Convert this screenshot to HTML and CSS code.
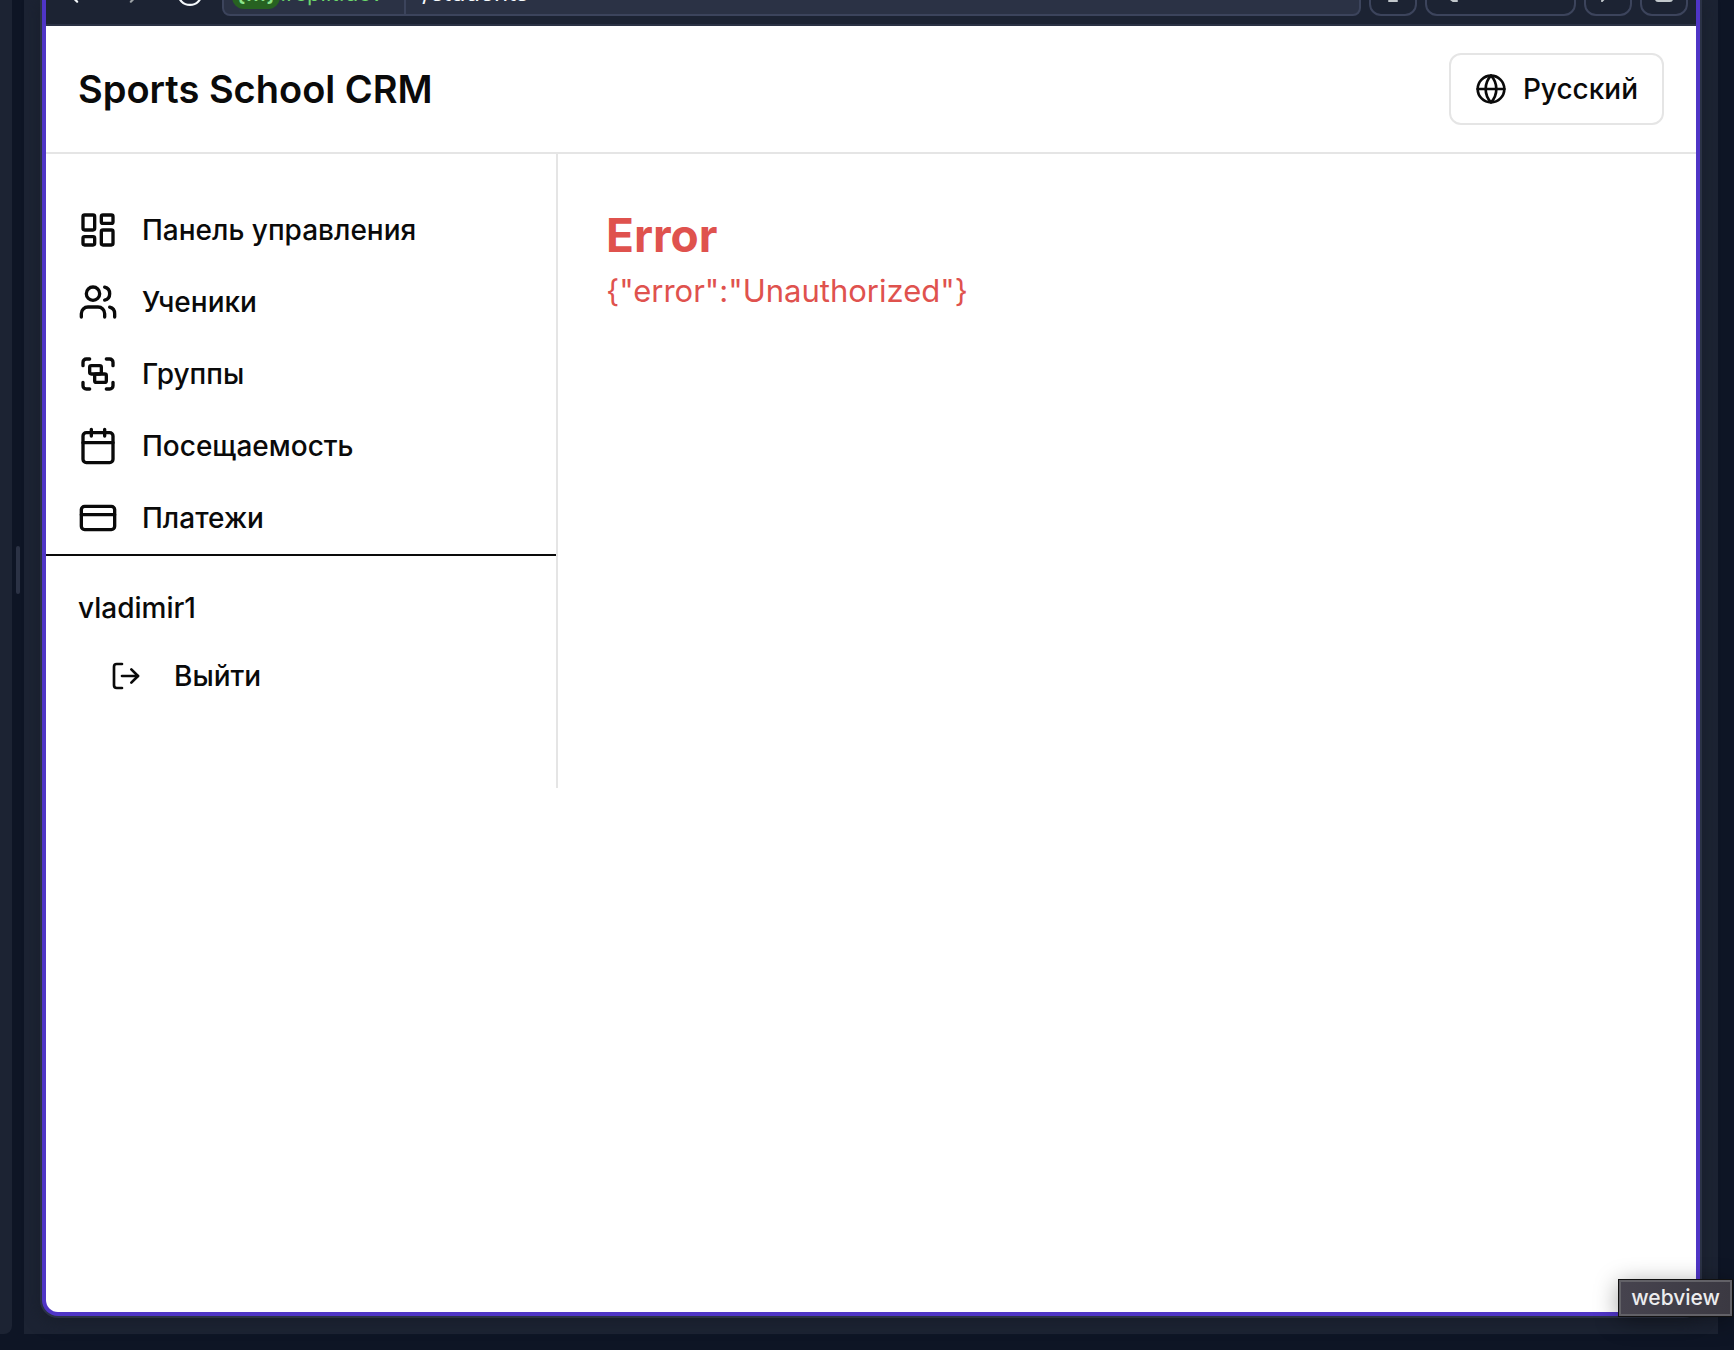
FILE: index.html
```html
<!DOCTYPE html>
<html lang="ru">
<head>
<meta charset="utf-8">
<title>Sports School CRM</title>
<link rel="stylesheet" href="styles.css">
</head>
<body>
<div class="workspace">
  <div class="side-pane"></div>
  <div class="splitter"><span class="grip"></span></div>
  <div class="pane">
    <div class="webview">
      <div class="toolbar">
        <div class="nav-tools">
          <button class="tool" aria-label="Back"><svg viewBox="0 0 24 24"><path d="M15 3l-9 9 8 8"/></svg></button>
          <button class="tool dim" aria-label="Forward"><svg viewBox="0 0 24 24"><path d="M9 3l9 9-8 8"/></svg></button>
          <button class="tool" aria-label="Reload"><svg viewBox="0 0 24 24"><circle cx="11" cy="12" r="11"/></svg></button>
        </div>
        <div class="address">
          <div class="host"><span class="badge">{...}</span><span>.replit.dev</span></div>
          <div class="path">/students</div>
        </div>
        <div class="actions">
          <button class="box" aria-label="Devices"><svg viewBox="0 0 24 24"><path d="M3 4h18v12H3zM12 16v5M8 21h8"/></svg></button>
          <button class="box wide" aria-label="Devtools"><svg viewBox="0 0 24 24"><path d="M6 14v4l4 3h4"/></svg></button>
          <button class="box" aria-label="Tools"><svg viewBox="0 0 24 24"><path d="M6 21l8-8"/></svg></button>
          <button class="box" aria-label="Open in new tab"><svg viewBox="0 0 24 24"><rect x="4" y="4" width="16" height="17" rx="2"/></svg></button>
        </div>
      </div>
      <header class="header">
        <h1 class="brand">Sports School CRM</h1>
        <button class="language">
          <svg class="icon-md" viewBox="0 0 24 24"><circle cx="12" cy="12" r="10"/><path d="M12 2a14.5 14.5 0 0 0 0 20 14.5 14.5 0 0 0 0-20"/><path d="M2 12h20"/></svg>
          Русский
        </button>
      </header>
      <div class="layout">
        <aside class="sidebar">
          <nav class="menu">
            <a class="item" href="#"><svg class="icon-lg" viewBox="0 0 24 24"><rect x="3" y="3" width="7" height="9" rx="1"/><rect x="14" y="3" width="7" height="5" rx="1"/><rect x="14" y="12" width="7" height="9" rx="1"/><rect x="3" y="16" width="7" height="5" rx="1"/></svg>Панель управления</a>
            <a class="item" href="#"><svg class="icon-lg" viewBox="0 0 24 24"><path d="M16 21v-2a4 4 0 0 0-4-4H6a4 4 0 0 0-4 4v2"/><circle cx="9" cy="7" r="4"/><path d="M22 21v-2a4 4 0 0 0-3-3.870"/><path d="M16 3.130a4 4 0 0 1 0 7.750"/></svg>Ученики</a>
            <a class="item" href="#"><svg class="icon-lg" viewBox="0 0 24 24"><path d="M3 7V5c0-1.100.900-2 2-2h2"/><path d="M17 3h2c1.100 0 2 .900 2 2v2"/><path d="M21 17v2c0 1.100-.900 2-2 2h-2"/><path d="M7 21H5c-1.100 0-2-.900-2-2v-2"/><rect x="7" y="7" width="7" height="5" rx="1"/><rect x="10" y="12" width="7" height="5" rx="1"/></svg>Группы</a>
            <a class="item" href="#"><svg class="icon-lg" viewBox="0 0 24 24"><path d="M8 2v4M16 2v4"/><rect x="3" y="4" width="18" height="18" rx="2"/><path d="M3 10h18"/></svg>Посещаемость</a>
            <a class="item" href="#"><svg class="icon-lg" viewBox="0 0 24 24"><rect x="2" y="5" width="20" height="14" rx="2"/><path d="M2 10h20"/></svg>Платежи</a>
          </nav>
          <div class="account">
            <p class="user">vladimir1</p>
            <button class="logout"><svg class="icon-md" viewBox="0 0 24 24"><path d="M9 21H5a2 2 0 0 1-2-2V5a2 2 0 0 1 2-2h4"/><path d="M16 17l5-5-5-5"/><path d="M21 12H9"/></svg>Выйти</button>
          </div>
        </aside>
        <main class="content">
          <h2 class="error-title">Error</h2>
          <p class="error-text">{"error":"Unauthorized"}</p>
        </main>
      </div>
    </div>
  </div>
</div>
<div class="tooltip" role="tooltip">webview</div>
</body>
</html>
```

FILE: styles.css
```css
* {
  box-sizing: border-box;
}

body {
  margin: 0;
  background: #0e1525;
  color: #0a0a0a;
  font-family: Inter, "Liberation Sans", sans-serif;
  font-size: 28px;
  line-height: 40px;
}

h1, h2, p {
  margin: 0;
}

button {
  margin: 0;
  padding: 0;
  border: 0;
  background: none;
  color: inherit;
  font: inherit;
}

a {
  color: inherit;
  text-decoration: none;
}

svg {
  flex: none;
  fill: none;
  stroke: currentColor;
  stroke-width: 2;
  stroke-linecap: round;
  stroke-linejoin: round;
}

.icon-md {
  width: 32px;
  height: 32px;
}

.icon-lg {
  width: 40px;
  height: 40px;
}

.workspace {
  display: flex;
  height: 100vh;
  padding: 0 16px 16px 0;
  overflow: hidden;
}

.side-pane {
  width: 12px;
  background: #1c2333;
  border-radius: 0 0 8px 0;
}

.splitter {
  display: flex;
  width: 12px;
  justify-content: center;
  padding-top: 546px;
}

.grip {
  width: 4px;
  height: 48px;
  border-radius: 2px;
  background: #2b3245;
}

.pane {
  display: flex;
  flex: 1;
  min-width: 0;
  padding: 0 16px 16px;
  background: #1c2333;
}

.webview {
  display: flex;
  flex: 1;
  min-width: 0;
  flex-direction: column;
  overflow: hidden;
  border: solid #4f35c6;
  border-width: 0 4px 4px;
  border-radius: 0 0 16px 16px;
  margin: 0 2px 2px;
  background: #fff;
  box-shadow: 0 0 0 2px #2b3245, 0 4px 16px 2px #181e2b;
}

.toolbar {
  display: flex;
  height: 26px;
  flex: none;
  align-items: flex-end;
  padding: 0 8px;
  border-bottom: 2px solid #2b3245;
  background: #1c2333;
  color: #f5f9fc;
}

.nav-tools {
  display: flex;
  width: 168px;
  flex: none;
  gap: 32px;
  padding: 0 0 18px 8px;
}

.tool {
  display: flex;
}

.tool svg {
  width: 26px;
  height: 26px;
  overflow: visible;
}

.dim {
  color: #9da2a6;
}

.address {
  display: flex;
  height: 48px;
  flex: 1;
  margin: 0 8px 8px 0;
  border: 2px solid #3c445c;
  border-radius: 8px;
  background: #2b3245;
  font-size: 24px;
  line-height: 32px;
}

.host {
  display: flex;
  width: 182px;
  flex: none;
  align-items: center;
  padding: 2px 0 0 8px;
  border-right: 2px solid #3c445c;
  color: #6cd96c;
  font-size: 22px;
}

.badge {
  width: 48px;
  border-radius: 12px;
  background: #276221;
  color: #8be58b;
  font-weight: 600;
  text-align: center;
}

.path {
  align-self: center;
  padding: 2px 16px 0;
}

.actions {
  display: flex;
  gap: 8px;
  padding-bottom: 8px;
}

.box {
  display: flex;
  width: 48px;
  height: 48px;
  align-items: center;
  justify-content: center;
  border: 2px solid #3c445c;
  border-radius: 12px;
  color: #c2c8cc;
}

.box svg {
  width: 24px;
  height: 24px;
}

.wide {
  width: 151px;
  justify-content: flex-start;
  padding-left: 16px;
}

.header {
  display: flex;
  height: 128px;
  flex: none;
  align-items: center;
  justify-content: space-between;
  padding: 0 32px;
  border-bottom: 2px solid #e5e5e5;
}

.brand {
  font-size: 38px;
  font-weight: 600;
  line-height: 56px;
}

.language {
  display: flex;
  height: 72px;
  align-items: center;
  gap: 16px;
  padding: 0 24px;
  border: 2px solid #e5e5e5;
  border-radius: 12px;
  font-weight: 500;
}

.layout {
  display: flex;
  align-items: flex-start;
}

.sidebar {
  width: 512px;
  flex: none;
  padding: 40px 0 76px;
  border-right: 2px solid #e5e5e5;
  font-weight: 500;
}

.menu {
  border-bottom: 2px solid #0a0a0a;
}

.item {
  display: flex;
  height: 72px;
  align-items: center;
  gap: 24px;
  padding: 0 32px;
}

.account {
  padding: 32px 32px 0;
}

.logout {
  display: flex;
  height: 72px;
  margin-top: 12px;
  align-items: center;
  gap: 32px;
  padding: 0 32px;
}

.content {
  flex: 1;
  padding: 48px;
  color: #df524e;
}

.error-title {
  font-size: 46px;
  font-weight: 700;
  line-height: 66px;
}

.error-text {
  font-size: 31px;
  line-height: 46px;
}

.tooltip {
  position: absolute;
  right: 2px;
  bottom: 34px;
  padding: 2px 10px;
  border: 2px solid #626167;
  background: linear-gradient(90deg, #46434e, #3b3942);
  box-shadow: 0 0 0 1px #111, 0 4px 24px #0006;
  color: #ececee;
  font-size: 21px;
  font-weight: 500;
  line-height: 28px;
}
```
